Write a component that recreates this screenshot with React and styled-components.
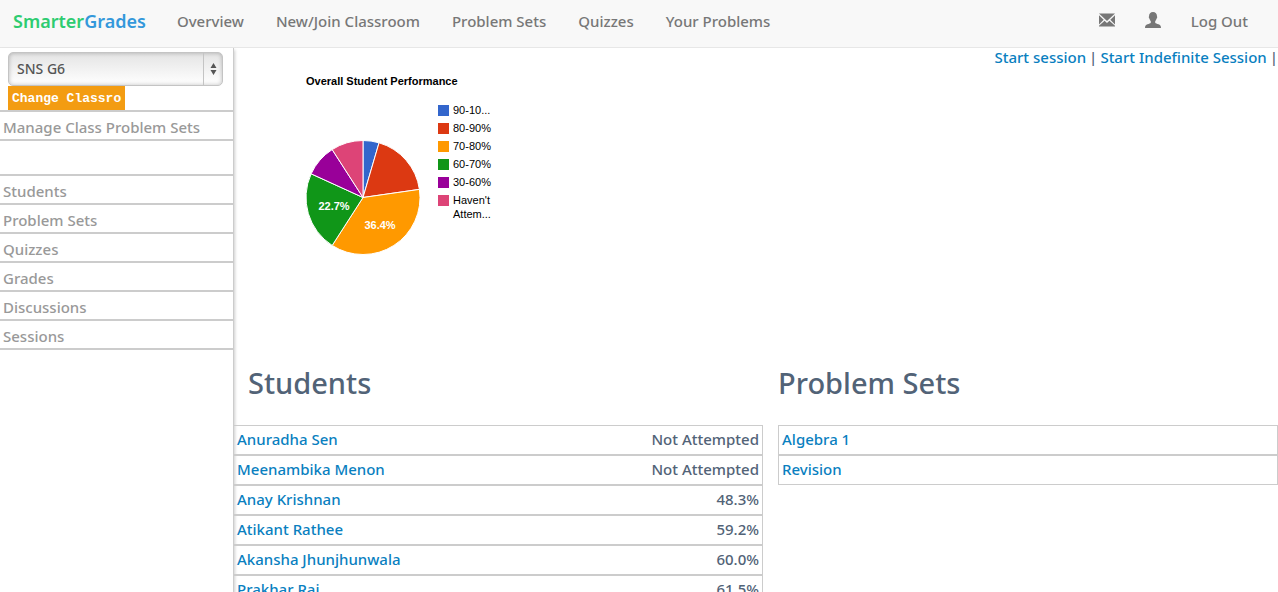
import React from "react";
import styled, { createGlobalStyle } from "styled-components";

const GlobalStyle = createGlobalStyle`
  * { box-sizing: border-box; }
  body {
    margin: 0;
    background: #fff;
    color: #526377;
    font: 500 15px/20px "Noto Sans", "Open Sans", sans-serif;
  }
`;

const Page = styled.div`
  display: flex;
  flex-direction: column;
  height: 100vh;
  overflow: hidden;
`;

const Navbar = styled.header`
  display: flex;
  flex: none;
  align-items: center;
  height: 48px;
  padding: 0 30px 6px 13px;
  background: #f8f8f8;
  border-bottom: 1px solid #e7e7e7;
`;

const Brand = styled.a`
  margin-right: 31px;
  color: #2ecc71;
  font-size: 18px;
  font-weight: 600;
  text-decoration: none;
`;

const BrandAccent = styled.span`
  color: #3498db;
`;

const NavGroup = styled.nav`
  display: flex;
  align-items: center;
  gap: ${(p) => (p.$end ? "30px" : "32px")};
  margin-left: ${(p) => (p.$end ? "auto" : "0")};
`;

const NavLink = styled.a`
  display: flex;
  align-items: center;
  color: #777;
  text-decoration: none;
  white-space: nowrap;
`;

const NavIcon = styled.svg`
  display: block;
  width: 16px;
  height: 16px;
  margin-bottom: 2px;
  fill: #777;
`;

const Body = styled.div`
  display: flex;
  flex: 1;
  min-height: 0;
`;

const Sidebar = styled.aside`
  flex: none;
  width: 234px;
  border-right: 1px solid #ccc;
  box-shadow: 1px 2px 3px rgba(0, 0, 0, 0.2);
`;

const ClassForm = styled.form`
  display: flex;
  flex-direction: column;
  align-items: flex-start;
  padding: 4px 10px 0 8px;
`;

const SelectWrap = styled.div`
  position: relative;
  width: 100%;
  height: 34px;
`;

const Select = styled.select`
  appearance: none;
  width: 100%;
  height: 34px;
  padding: 0 28px 0 8px;
  border: 1px solid #c4c4c4;
  border-radius: 5px;
  background: linear-gradient(#e4e4e4, #fff);
  box-shadow: inset 0 0 4px rgba(0, 0, 0, 0.25);
  color: #555;
  font: 500 14px/20px "Noto Sans", "Open Sans", sans-serif;
`;

const SelectArrows = styled.span`
  position: absolute;
  top: 1px;
  right: 0;
  bottom: 1px;
  display: flex;
  align-items: center;
  justify-content: center;
  width: 20px;
  border-left: 1px solid #c4c4c4;
  pointer-events: none;
`;

const ChangeButton = styled.button`
  width: 117px;
  height: 24px;
  padding: 1px 0 0 4px;
  border: 0;
  background: #f39c12;
  color: #fff;
  font: bold 13px/24px "Liberation Mono", monospace;
  text-align: left;
  white-space: nowrap;
  overflow: hidden;
`;

const Menu = styled.ul`
  margin: 0 0 ${(p) => (p.$spaced ? "33px" : "0")};
  padding: 0;
  border-top: 2px solid #ccc;
  list-style: none;
`;

const MenuItem = styled.li`
  height: 29px;
  border-bottom: 2px solid #ccc;
`;

const MenuLink = styled.a`
  display: block;
  padding: 0 3px;
  color: #999;
  line-height: 30px;
  text-decoration: none;
`;

const Main = styled.main`
  flex: 1;
  min-width: 0;
`;

const SessionBar = styled.div`
  display: flex;
  justify-content: flex-end;
  gap: 3px;
  height: 18px;
  line-height: 18px;
`;

const Link = styled.a`
  color: #0a7fbf;
  text-decoration: none;
`;

const Chart = styled.figure`
  height: 299px;
  margin: 0;
  padding: 7px 0 0 72px;
  color: #000;
  font: 11px/14px "Liberation Sans", Arial, sans-serif;
`;

const ChartTitle = styled.figcaption`
  font-weight: bold;
  line-height: 16px;
`;

const ChartBody = styled.div`
  display: flex;
  gap: 17px;
`;

const Pie = styled.svg`
  width: 115px;
  height: 115px;
  margin-top: 51px;
  text {
    fill: #fff;
    font-weight: bold;
    text-anchor: middle;
  }
`;

const Legend = styled.ul`
  display: flex;
  flex-direction: column;
  gap: 4px;
  width: 64px;
  margin: 14px 0 0;
  padding: 0;
  list-style: none;
`;

const LegendItem = styled.li`
  display: flex;
  gap: 4px;
`;

const Swatch = styled.span`
  flex: none;
  width: 11px;
  height: 11px;
  margin-top: 2px;
  background: ${(p) => p.$color};
`;

const Lists = styled.div`
  display: grid;
  grid-template-columns: 529fr 500fr;
  column-gap: 15px;
`;

const Heading = styled.h2`
  margin: 0 0 25px;
  padding-left: ${(p) => (p.$indent ? "14px" : "0")};
  font-size: 29px;
  font-weight: 500;
  line-height: 35px;
`;

const Table = styled.table`
  width: 100%;
  border-collapse: separate;
  border-spacing: 0;
`;

const Cell = styled.td`
  height: 30px;
  padding: 0 3px 2px;
  border: 1px solid #ccc;
  border-left-width: ${(p) => (p.$end || p.$flush ? "0" : "1px")};
  border-right-width: ${(p) => (p.$flush ? "0" : "1px")};
  text-align: ${(p) => (p.$end ? "right" : "left")};
`;

const slices = [
  { label: "90-10...", count: 1, color: "#3366cc" },
  { label: "80-90%", count: 4, color: "#dc3912" },
  { label: "70-80%", count: 8, color: "#ff9900", share: "36.4%", x: 74, y: 89 },
  { label: "60-70%", count: 5, color: "#109618", share: "22.7%", x: 28, y: 70 },
  { label: "30-60%", count: 2, color: "#990099" },
  { label: "Haven't Attem...", count: 2, color: "#dd4477" },
];

const total = slices.reduce((sum, s) => sum + s.count, 0);

function slicePath(index) {
  const before = slices.slice(0, index).reduce((sum, s) => sum + s.count, 0);
  const point = (n) => {
    const angle = (n / total) * Math.PI * 2;
    return `${57 + 57 * Math.sin(angle)} ${57.5 - 57 * Math.cos(angle)}`;
  };
  return `M57 57.5L${point(before)}A57 57 0 0 1 ${point(before + slices[index].count)}Z`;
}

const students = [
  ["Anuradha Sen", "Not Attempted"],
  ["Meenambika Menon", "Not Attempted"],
  ["Anay Krishnan", "48.3%"],
  ["Atikant Rathee", "59.2%"],
  ["Akansha Jhunjhunwala", "60.0%"],
  ["Prakhar Raj", "61.5%"],
];

const navLinks = ["Overview", "New/Join Classroom", "Problem Sets", "Quizzes", "Your Problems"];
const menuLinks = ["Students", "Problem Sets", "Quizzes", "Grades", "Discussions", "Sessions"];

export default function App() {
  return (
    <Page>
      <GlobalStyle />
      <Navbar>
        <Brand href="#">
          Smarter<BrandAccent>Grades</BrandAccent>
        </Brand>
        <NavGroup>
          {navLinks.map((label) => (
            <NavLink href="#" key={label}>{label}</NavLink>
          ))}
        </NavGroup>
        <NavGroup $end>
          <NavLink href="#" aria-label="Messages">
            <NavIcon viewBox="0 0 16 16">
              <path d="M0 1.500h16L8 9zM0 3.200l4.700 4.600L0 12.400zM16 3.200l-4.700 4.600 4.700 4.600zM5.600 8.700L8 11l2.400-2.300 5.600 5.100v.7H0v-.7z" />
            </NavIcon>
          </NavLink>
          <NavLink href="#" aria-label="Profile">
            <NavIcon viewBox="0 0 16 16">
              <path d="M8 0c2.500 0 4 1.700 4 4.200 0 .4.300.6.200 1.300-.1.600-.5.800-.7 1.200-.3 1.300-.9 2-1.300 2.500v1.500c.5.700 1.700 1 3.300 1.600 1.700.7 2.500 1.300 2.500 3.700H0c0-2.400.8-3 2.500-3.700 1.600-.6 2.800-.9 3.300-1.600V9.200c-.4-.5-1-1.200-1.300-2.500-.2-.4-.6-.6-.7-1.200C3.700 4.800 4 4.600 4 4.200 4 1.700 5.500 0 8 0z" />
            </NavIcon>
          </NavLink>
          <NavLink href="#">Log Out</NavLink>
        </NavGroup>
      </Navbar>
      <Body>
        <Sidebar>
          <ClassForm>
            <SelectWrap>
              <Select aria-label="Classroom" defaultValue="SNS G6">
                <option>SNS G6</option>
              </Select>
              <SelectArrows>
                <svg width="7" height="12" viewBox="0 0 7 12" fill="#555">
                  <path d="M3.500 0L6.500 5h-6zM.5 7h6l-3 5z" />
                </svg>
              </SelectArrows>
            </SelectWrap>
            <ChangeButton type="button">Change Classro</ChangeButton>
          </ClassForm>
          <Menu $spaced>
            <MenuItem><MenuLink href="#">Manage Class Problem Sets</MenuLink></MenuItem>
          </Menu>
          <Menu>
            {menuLinks.map((label) => (
              <MenuItem key={label}><MenuLink href="#">{label}</MenuLink></MenuItem>
            ))}
          </Menu>
        </Sidebar>
        <Main>
          <SessionBar>
            <Link href="#">Start session</Link>
            <span>|</span>
            <Link href="#">Start Indefinite Session</Link>
            <span>|</span>
          </SessionBar>
          <Chart>
            <ChartTitle>Overall Student Performance</ChartTitle>
            <ChartBody>
              <Pie viewBox="0 0 115 115" role="img" aria-label="Overall student performance">
                {slices.map((s, i) => (
                  <path key={s.label} d={slicePath(i)} fill={s.color} stroke="#fff" />
                ))}
                {slices.filter((s) => s.share).map((s) => (
                  <text key={s.label} x={s.x} y={s.y}>{s.share}</text>
                ))}
              </Pie>
              <Legend>
                {slices.map((s) => (
                  <LegendItem key={s.label}>
                    <Swatch $color={s.color} />
                    <span>{s.label}</span>
                  </LegendItem>
                ))}
              </Legend>
            </ChartBody>
          </Chart>
          <Lists>
            <section>
              <Heading $indent>Students</Heading>
              <Table>
                <tbody>
                  {students.map(([name, score]) => (
                    <tr key={name}>
                      <Cell $flush><Link href="#">{name}</Link></Cell>
                      <Cell $end>{score}</Cell>
                    </tr>
                  ))}
                </tbody>
              </Table>
            </section>
            <section>
              <Heading>Problem Sets</Heading>
              <Table>
                <tbody>
                  {["Algebra 1", "Revision"].map((name) => (
                    <tr key={name}>
                      <Cell><Link href="#">{name}</Link></Cell>
                    </tr>
                  ))}
                </tbody>
              </Table>
            </section>
          </Lists>
        </Main>
      </Body>
    </Page>
  );
}
